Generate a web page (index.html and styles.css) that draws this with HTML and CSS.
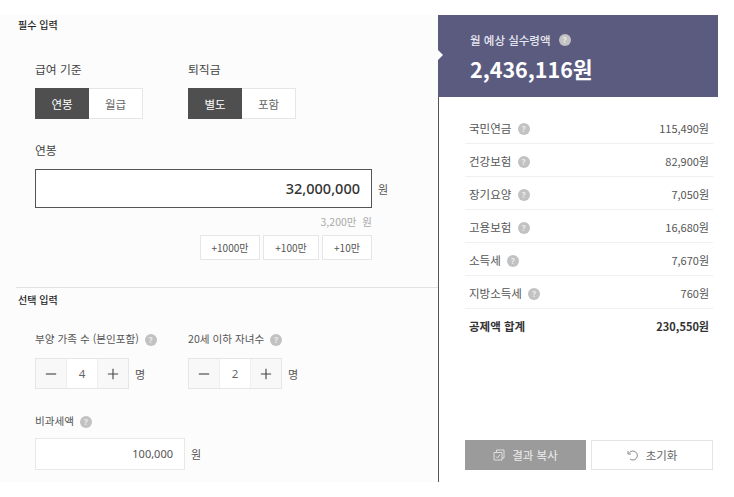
FILE: index.html
```html
<!DOCTYPE html>
<html lang="ko">
<head>
<meta charset="utf-8">
<title>연봉 실수령액 계산기</title>
<link rel="stylesheet" href="styles.css">
</head>
<body>
<main class="calc">
  <div class="inputs">
    <section class="required">
      <h2 class="sec-title">필수 입력</h2>
      <div class="row">
        <div class="group g1">
          <div class="label">급여 기준</div>
          <div class="toggle">
            <button class="tg on">연봉</button><button class="tg">월급</button>
          </div>
        </div>
        <div class="group">
          <div class="label">퇴직금</div>
          <div class="toggle">
            <button class="tg on">별도</button><button class="tg">포함</button>
          </div>
        </div>
      </div>
      <div class="label salary-label">연봉</div>
      <div class="salary-row">
        <div class="salary-input">32,000,000</div>
        <span class="unit">원</span>
      </div>
      <div class="salary-side">
        <div class="hint">3,200만&nbsp; 원</div>
        <div class="adds">
          <button class="add a1">+1000만</button>
          <button class="add a2">+100만</button>
          <button class="add a3">+10만</button>
        </div>
      </div>
    </section>
    <section class="optional">
      <h2 class="sec-title">선택 입력</h2>
      <div class="row opt-row">
        <div class="group g1">
          <div class="label small">부양 가족 수 (본인포함) <i class="q">?</i></div>
          <div class="stepper-row">
            <div class="stepper">
              <span class="st-btn"><svg viewBox="0 0 14 14" class="st-ic"><path d="M1 7h12"/></svg></span><span class="st-val">4</span><span class="st-btn"><svg viewBox="0 0 14 14" class="st-ic"><path d="M1 7h12M7 1v12"/></svg></span>
            </div>
            <span class="unit">명</span>
          </div>
        </div>
        <div class="group">
          <div class="label small">20세 이하 자녀수 <i class="q">?</i></div>
          <div class="stepper-row">
            <div class="stepper">
              <span class="st-btn"><svg viewBox="0 0 14 14" class="st-ic"><path d="M1 7h12"/></svg></span><span class="st-val">2</span><span class="st-btn"><svg viewBox="0 0 14 14" class="st-ic"><path d="M1 7h12M7 1v12"/></svg></span>
            </div>
            <span class="unit">명</span>
          </div>
        </div>
      </div>
      <div class="label small free-label">비과세액 <i class="q">?</i></div>
      <div class="free-row">
        <div class="free-input">100,000</div>
        <span class="unit">원</span>
      </div>
    </section>
  </div>
  <aside class="result">
    <header class="res-head">
      <div class="res-title">월 예상 실수령액 <i class="q q-head">?</i></div>
      <div class="res-total">2,436,116원</div>
    </header>
    <div class="res-body">
      <ul class="items">
        <li class="item"><span>국민연금 <i class="q">?</i></span><span class="val">115,490원</span></li>
        <li class="item"><span>건강보험 <i class="q">?</i></span><span class="val">82,900원</span></li>
        <li class="item"><span>장기요양 <i class="q">?</i></span><span class="val">7,050원</span></li>
        <li class="item"><span>고용보험 <i class="q">?</i></span><span class="val">16,680원</span></li>
        <li class="item"><span>소득세 <i class="q">?</i></span><span class="val">7,670원</span></li>
        <li class="item"><span>지방소득세 <i class="q">?</i></span><span class="val">760원</span></li>
        <li class="item total"><span>공제액 합계</span><span class="val">230,550원</span></li>
      </ul>
      <div class="actions">
        <button class="act copy">
          <svg viewBox="0 0 12 12" class="act-ic"><path d="M3.500 3V1h7.500v8H9M1 3.500h8V11H1zM3 7.500l1.500 1.500L7 5.500"/></svg>
          결과 복사
        </button>
        <button class="act reset">
          <svg viewBox="0 0 12 12" class="act-ic"><path d="M2.500 3.500A4.500 4.500 0 1 1 3 10M1 2v3h3"/></svg>
          초기화
        </button>
      </div>
    </div>
  </aside>
</main>
</body>
</html>
```
FILE: styles.css
```css
* { box-sizing: border-box; }
html, body { margin: 0; padding: 0; background: #fff; }
body {
  width: 734px;
  height: 497px;
  overflow: hidden;
  font-family: "Noto Sans CJK KR", "Noto Sans", sans-serif;
  color: #444;
  font-size: 12px;
}
button { font: inherit; cursor: pointer; padding: 0; margin: 0; }
ul { list-style: none; margin: 0; padding: 0; }

.calc {
  display: flex;
  padding-top: 15px;
  height: 482px;
}
.inputs {
  width: 438px;
  background: #fcfcfc;
  display: flex;
  flex-direction: column;
}
.sec-title {
  margin: 0;
  font-size: 10px;
  line-height: 14px;
  font-weight: 500;
  color: #222;
}
.required {
  margin-left: 16px;
  padding: 3px 0 0 2px;
  height: 273px;
  border-bottom: 1px solid #e2e2e2;
}
.optional {
  padding: 5px 0 0 18px;
  flex: 1;
}
.row { display: flex; padding-left: 17px; }
.required .row { margin-top: 28px; }
.opt-row { margin-top: 23px; }
.group { display: flex; flex-direction: column; }
.g1 { width: 153px; }
.label {
  font-size: 11.800px;
  line-height: 18px;
  color: #444;
  height: 18px;
  display: flex;
  align-items: center;
  white-space: pre;
}
.label.small { font-size: 10.600px; color: #555; }
.toggle { display: flex; margin-top: 10px; height: 31px; }
.tg {
  width: 54px;
  height: 31px;
  border: 1px solid #e6e6e6;
  border-left: 0;
  background: #fff;
  color: #666;
  font-size: 11.500px;
}
.tg.on { background: #4f4f4f; border: 0; color: #fff; }
.salary-label { margin: 22px 0 0 17px; }
.salary-row {
  display: flex;
  align-items: center;
  margin: 10px 0 0 17px;
}
.salary-input {
  width: 337px;
  height: 39px;
  border: 1px solid #555;
  background: #fff;
  text-align: right;
  padding-right: 11px;
  font-family: "Noto Sans", sans-serif;
  font-size: 14.500px;
  font-weight: 500;
  line-height: 37px;
  color: #333;
}
.unit { margin-left: 6px; font-size: 11px; color: #555; }
.salary-side {
  width: 354px;
  display: flex;
  flex-direction: column;
  align-items: flex-end;
}
.hint {
  margin-top: 7px;
  font-size: 10.500px;
  line-height: 14px;
  color: #aaa;
}
.adds { display: flex; gap: 3px; margin-top: 6px; }
.add {
  height: 25px;
  border: 1px solid #e6e6e6;
  background: #fff;
  color: #555;
  font-size: 10px;
}
.a1 { width: 60px; }
.a2 { width: 56px; }
.a3 { width: 50px; }
.q {
  display: inline-block;
  width: 12px;
  height: 12px;
  margin: 2px 0 0 3px;
  border-radius: 50%;
  background: #c2c2c2;
  color: #eee;
  font-family: "Noto Sans", sans-serif;
  font-size: 8px;
  font-weight: 700;
  font-style: normal;
  line-height: 12px;
  text-align: center;
  flex: none;
}
.q-head { margin-left: 5px; margin-top: 0; }
.stepper-row { display: flex; align-items: center; margin-top: 10px; }
.stepper {
  display: flex;
  width: 94px;
  height: 31px;
  border: 1px solid #e6e6e6;
  background: #fff;
}
.st-btn {
  width: 30px;
  background: #f8f8f8;
  display: flex;
  align-items: center;
  justify-content: center;
}
.st-val {
  flex: 1;
  text-align: center;
  line-height: 29px;
  font-family: "Noto Sans", sans-serif;
  font-size: 11.500px;
  color: #666;
  border-left: 1px solid #eee;
  border-right: 1px solid #eee;
}
.st-ic { width: 12px; height: 12px; fill: none; stroke: #444; stroke-width: 1.300; }
.free-label { margin: 23px 0 0 17px; }
.free-row { display: flex; align-items: center; margin: 8px 0 0 17px; }
.free-input {
  width: 150px;
  height: 32px;
  border: 1px solid #e8e8e8;
  background: #fff;
  text-align: right;
  padding-right: 11px;
  line-height: 30px;
  font-family: "Noto Sans", sans-serif;
  font-size: 11px;
  color: #555;
}

.result {
  width: 280px;
  border-left: 1px solid #555;
  display: flex;
  flex-direction: column;
}
.res-head {
  position: relative;
  height: 82px;
  margin-left: -1px;
  background: #5b5b80;
  color: #fff;
  padding: 17px 0 0 32px;
}
.res-head::before {
  content: "";
  position: absolute;
  left: 0;
  top: 35px;
  border-style: solid;
  border-width: 5px 0 5px 5px;
  border-color: transparent transparent transparent #fff;
}
.res-title {
  font-size: 11.500px;
  line-height: 16px;
  font-weight: 500;
  color: #e8e8f0;
  display: flex;
  align-items: center;
  white-space: pre;
}
.res-total {
  margin-top: 6px;
  font-size: 21.500px;
  line-height: 30px;
  font-weight: 700;
}
.res-body {
  flex: 1;
  padding: 14px 5px 0 26px;
  display: flex;
  flex-direction: column;
}
.items { flex: 1; }
.item {
  display: flex;
  justify-content: space-between;
  align-items: center;
  height: 33px;
  padding: 1px 4px 0;
  border-bottom: 1px solid #f0f0f0;
  font-size: 11.500px;
  color: #555;
}
.item span:first-child { display: flex; align-items: center; white-space: pre; }
.val { font-size: 11px; }
.item.total { border-bottom: 0; font-weight: 700; color: #333; }
.actions {
  display: flex;
  justify-content: space-between;
  margin: 0 0 12px 0;
}
.act {
  width: 122px;
  height: 30px;
  font-size: 11.500px;
  display: flex;
  align-items: center;
  justify-content: center;
  gap: 7px;
  border: 0;
}
.copy { width: 121px; background: #9b9b9b; color: #eee; }
.reset { background: #fff; border: 1px solid #e4e4e4; color: #666; }
.act-ic { width: 12px; height: 12px; fill: none; stroke: currentColor; stroke-width: 0.800; }
```
